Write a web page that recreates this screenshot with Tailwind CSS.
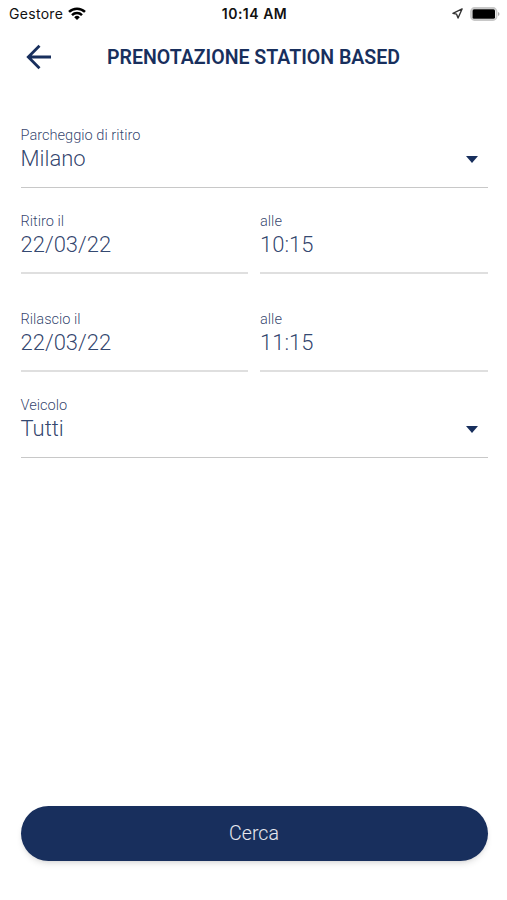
<!DOCTYPE html>
<html lang="it">
<head>
    <meta charset="UTF-8">
    <meta name="viewport" content="width=device-width, initial-scale=1.0">
    <title>Prenotazione Station Based</title>
    <script src="https://cdn.jsdelivr.net/npm/@tailwindcss/browser@4"></script>
</head>
<body class="bg-white font-[Roboto,sans-serif] text-[#182f5d]">
    <div class="flex flex-col h-[900px] w-[507px] overflow-hidden">
        <!-- Status bar -->
        <div class="grid grid-cols-3 items-center h-[27px] pl-[9px] pr-[7px] font-[Inter,sans-serif] text-[#111]">
            <div class="flex items-center gap-[5px] text-[14px] tracking-[0.3px]">
                <span>Gestore</span>
                <svg class="w-[18px] h-[13px]" viewBox="0 0 18 13" fill="none" stroke="#000" stroke-width="2.5">
                    <path d="M1 4.900a11.500 11.500 0 0 1 16 0"/>
                    <path d="M4 8.100a7.200 7.200 0 0 1 10 0"/>
                    <path d="M9 13L6.200 10.200a4 4 0 0 1 5.600 0z" fill="#000" stroke="none"/>
                </svg>
            </div>
            <div class="text-center text-[14px] font-semibold tracking-[0.5px] whitespace-nowrap">10:14 AM</div>
            <div class="flex items-center justify-end gap-[7px]">
                <svg class="w-[11px] h-[11px]" viewBox="0 0 12 12" fill="none" stroke="#333" stroke-width="1.5" stroke-linejoin="round">
                    <path d="M11 1L1 5.800l4 .9 1.600 4.300z"/>
                </svg>
                <svg class="w-[30px] h-[14px]" viewBox="0 0 30 14">
                    <rect x="1" y="1" width="25.500" height="12" rx="3.500" fill="#fff" stroke="#c8c8c8" stroke-width="1.800"/>
                    <rect x="2.500" y="2.300" width="22.500" height="9.400" rx="1.500" fill="#000"/>
                    <path d="M28 5v4c2-.8 2-3.200 0-4z" fill="#aaa"/>
                </svg>
            </div>
        </div>

        <!-- Header -->
        <header class="relative flex items-center justify-center h-[57px] pt-[4px]">
            <button class="absolute left-[26px] top-[17px]" aria-label="Indietro">
                <svg class="w-[26px] h-[26px]" viewBox="0 0 26 26" fill="none" stroke="currentColor" stroke-width="2.8">
                    <path d="M25 13H3M13.500 1.800L2.300 13l11.200 11.200"/>
                </svg>
            </button>
            <h1 class="text-[19.55px] font-semibold whitespace-nowrap">PRENOTAZIONE STATION BASED</h1>
        </header>

        <!-- Form -->
        <main class="flex flex-col px-[20.5px] pt-[42px] text-[#182f5d]/90">
            <div class="flex justify-between h-[62px] w-[467px] border-b border-[#c8c8c8]">
                <div>
                    <div class="text-[14.6px] leading-[18px] font-light">Parcheggio di ritiro</div>
                    <div class="text-[22px] leading-[30px] font-light">Milano</div>
                </div>
                <svg class="w-3 h-[7px] mt-[30px] mr-[10px] text-[#182f5d]" viewBox="0 0 12 7" fill="currentColor"><path d="M0 0h12L6 7z"/></svg>
            </div>
            <div class="flex gap-3 mt-6 w-[467px]">
                <div class="flex-1 h-[62px] border-b-2 border-[#dfdfdf]">
                    <div class="text-[14.6px] leading-[18px] font-light">Ritiro il</div>
                    <div class="text-[22px] leading-[30px] font-light">22/03/22</div>
                </div>
                <div class="flex-1 h-[62px] border-b-2 border-[#dfdfdf]">
                    <div class="text-[14.6px] leading-[18px] font-light">alle</div>
                    <div class="text-[22px] leading-[30px] font-light">10:15</div>
                </div>
            </div>
            <div class="flex gap-3 mt-9 w-[467px]">
                <div class="flex-1 h-[62px] border-b-2 border-[#dfdfdf]">
                    <div class="text-[14.6px] leading-[18px] font-light">Rilascio il</div>
                    <div class="text-[22px] leading-[30px] font-light">22/03/22</div>
                </div>
                <div class="flex-1 h-[62px] border-b-2 border-[#dfdfdf]">
                    <div class="text-[14.6px] leading-[18px] font-light">alle</div>
                    <div class="text-[22px] leading-[30px] font-light">11:15</div>
                </div>
            </div>
            <div class="flex justify-between mt-6 h-[62px] w-[467px] border-b border-[#c8c8c8]">
                <div>
                    <div class="text-[14.6px] leading-[18px] font-light">Veicolo</div>
                    <div class="text-[22px] leading-[30px] font-light">Tutti</div>
                </div>
                <svg class="w-3 h-[7px] mt-[30px] mr-[10px] text-[#182f5d]" viewBox="0 0 12 7" fill="currentColor"><path d="M0 0h12L6 7z"/></svg>
            </div>
        </main>

        <!-- Submit -->
        <button class="mt-auto mb-[39px] ml-[20.5px] w-[467px] h-[55px] rounded-full bg-[#182f5d] text-white/90 text-[19.6px] font-light shadow-md">Cerca</button>
    </div>
</body>
</html>
